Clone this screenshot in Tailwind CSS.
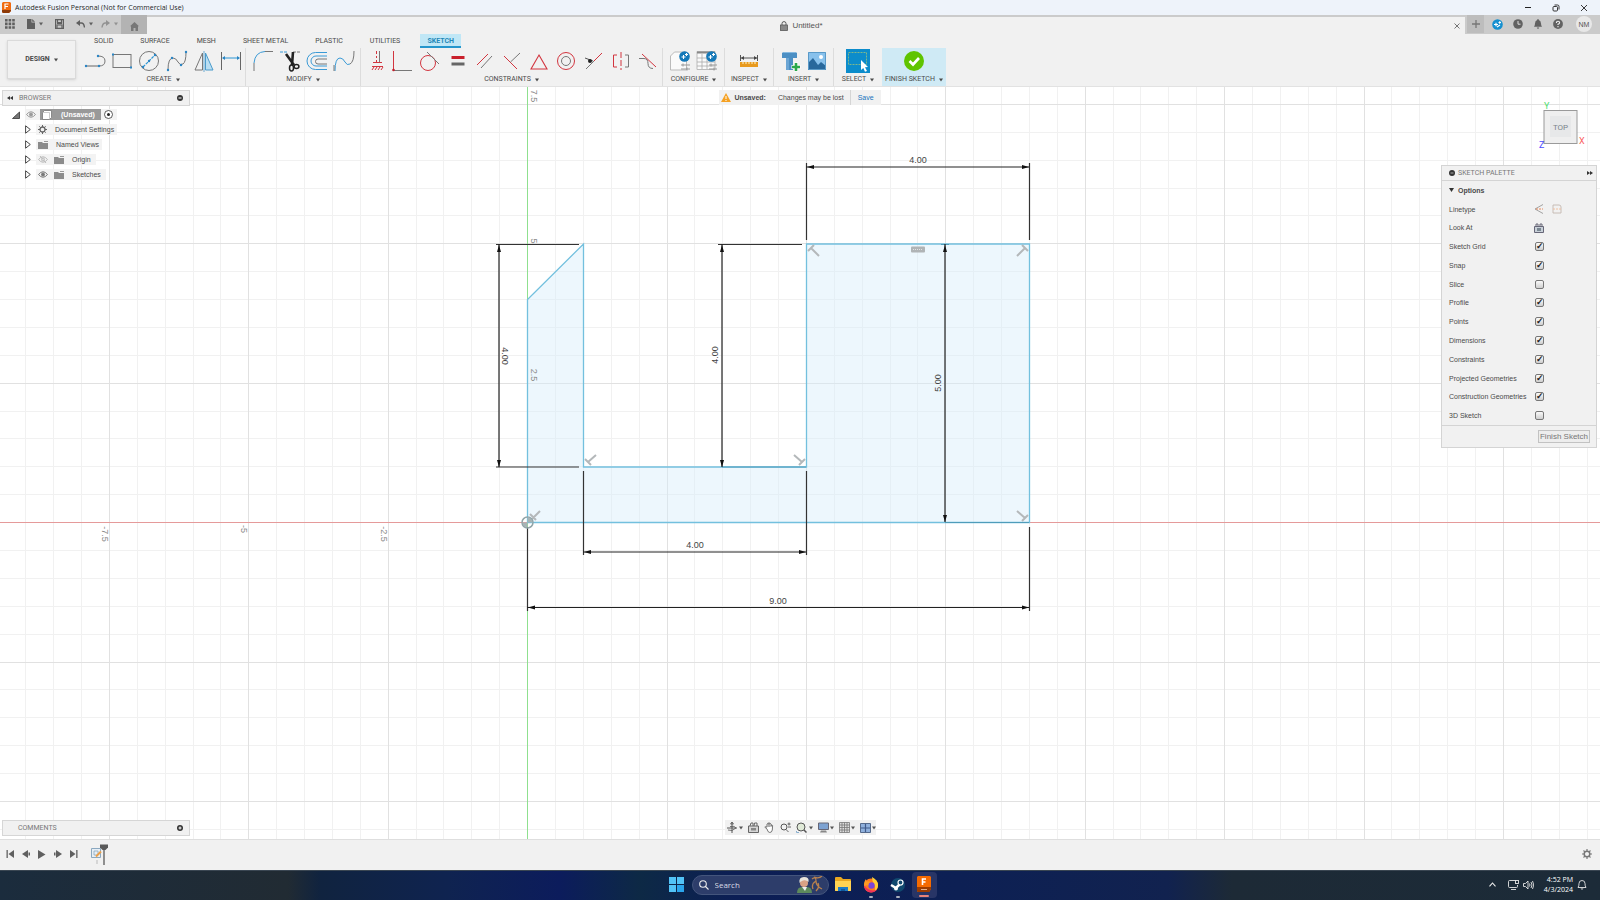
<!DOCTYPE html>
<html lang="en">
<head>
    <meta charset="UTF-8">
    <meta name="viewport" content="width=device-width, initial-scale=1.0">
    <title>Autodesk Fusion Personal (Not for Commercial Use)</title>
    <script src="https://cdn.jsdelivr.net/npm/@tailwindcss/browser@4"></script>
</head>
<body class="h-screen flex flex-col overflow-hidden bg-[#f1f1f1] font-['Liberation_Sans',Arial,sans-serif] text-[7px] leading-none text-[#4a4a4a]">

    <!-- Shared symbols -->
    <svg class="hidden">
        <symbol id="caret" viewBox="0 0 4 4"><path d="M0 .5h4L2 3.5z" fill="currentColor"/></symbol>
        <symbol id="expand" viewBox="0 0 6 9"><path d="M.6.8L5.300 4.500.6 8.200z" fill="#fff" stroke="#333" stroke-width=".9"/></symbol>
        <symbol id="folder" viewBox="0 0 10 8"><path d="M0 1h4l1 1h5v6H0z" fill="#8b8b8b"/><path d="M6 0h4v1H6z" fill="#999"/></symbol>
    </svg>

    <!-- Window title bar -->
    <header class="h-[15px] shrink-0 flex items-center justify-between bg-[#eef3fa] pl-[2px] pr-3 font-['Open_Sans',sans-serif] text-[#1f1f1f]">
        <div class="flex items-center gap-1">
            <svg class="w-[9px] h-[11px]" viewBox="0 0 9 11"><path d="M1 0h7l1 1v8l-2 2H1l-1-1V1z" fill="#f06a10"/><path d="M0 8h9v1l-2 2H1l-1-1z" fill="#8d3a08"/><path d="M3 7V2h3.5M3 4.5h3" stroke="#fff" stroke-width="1.2" fill="none"/></svg>
            <h1 class="text-[7px]">Autodesk Fusion Personal (Not for Commercial Use)</h1>
        </div>
        <div class="flex items-center gap-5">
            <button aria-label="Minimize"><svg class="w-2 h-2" viewBox="0 0 8 8" fill="none" stroke="#222"><path d="M1 3.5h6"/></svg></button>
            <button aria-label="Restore"><svg class="w-2 h-2" viewBox="0 0 8 8" fill="none" stroke="#222" stroke-width=".9"><rect x="1" y="2.5" width="4.5" height="4.5" rx="1"/><path d="M2.5 1h3q1.5 0 1.5 1.5v3"/></svg></button>
            <button aria-label="Close"><svg class="w-2 h-2" viewBox="0 0 8 8" fill="none" stroke="#222" stroke-width=".9"><path d="M1 1l6 6M7 1L1 7"/></svg></button>
        </div>
    </header>

    <!-- Quick access and document tab -->
    <div class="h-[19px] shrink-0 flex items-stretch bg-[#cbcbcb]">
        <div class="w-[121px] flex items-center pl-[5px] pb-[1px] text-[#5f5f5f]">
            <button aria-label="Data panel" class="mr-3"><svg class="w-[10px] h-[10px]" viewBox="0 0 10 10" fill="currentColor"><path d="M0 0h2.6v2.6H0zM3.6 0h2.6v2.6H3.6zM7.2 0h2.6v2.6H7.2zM0 3.6h2.6v2.6H0zM3.6 3.6h2.6v2.6H3.6zM7.2 3.6h2.6v2.6H7.2zM0 7.2h2.6v2.6H0zM3.6 7.2h2.6v2.6H3.6zM7.2 7.2h2.6v2.6H7.2z"/></svg></button>
            <button aria-label="File" class="flex items-center gap-1 mr-3"><svg class="w-2 h-[10px]" viewBox="0 0 8 10" fill="currentColor"><path d="M0 0h4.5v3.5H8V10H0z"/><path d="M5.2 0L8 2.8H5.2z"/></svg><svg class="w-1 h-1"><use href="#caret"/></svg></button>
            <button aria-label="Save" class="mr-3"><svg class="w-[9px] h-[10px]" viewBox="0 0 9 10" fill="none" stroke="currentColor" stroke-width="1.2"><path d="M.6.6h7.8v8.8H.6z"/><path d="M2.5.6v3h4v-3M2 9V6h5v3"/><path d="M2 4.6h5"/></svg></button>
            <button aria-label="Undo" class="flex items-center gap-1 mr-2"><svg class="w-[9px] h-[8px]" viewBox="0 0 9 8"><path d="M0 3l4-3v6z" fill="currentColor"/><path d="M3 3h2.5Q8 3 8.5 7.5" fill="none" stroke="currentColor" stroke-width="1.4"/></svg><svg class="w-1 h-1"><use href="#caret"/></svg></button>
            <button aria-label="Redo" class="flex items-center gap-1 text-[#929292]"><svg class="w-[9px] h-[8px]" viewBox="0 0 9 8"><path d="M9 3L5 0v6z" fill="currentColor"/><path d="M6 3H4.500Q1.500 3 1 7.500" fill="none" stroke="currentColor" stroke-width="1.4"/></svg><svg class="w-1 h-1"><use href="#caret"/></svg></button>
        </div>
        <button aria-label="Home" class="w-[26px] flex items-center justify-center bg-[#b3b3b3] pt-[3px]"><svg class="w-[9px] h-[9px]" viewBox="0 0 9 9"><path d="M4.500 0L9 4.200H8V9H5.500V6h-2v3H1V4.200H0z" fill="#777"/></svg></button>
        <div class="flex-1 flex items-center bg-[#f1f1f1] mt-[2px] pr-[5px]">
            <div class="flex-1 flex items-center justify-center gap-1 pl-[2px] text-[8px] text-[#555]">
                <svg class="w-2 h-[10px]" viewBox="0 0 8 10"><rect x=".5" y="4" width="7" height="5.500" fill="#8a8a8a" stroke="#5a5a5a" stroke-width=".8"/><path d="M2 4V2.500Q2 .6 4 .6T6 2.500V4" fill="none" stroke="#5a5a5a"/></svg>
                <span>Untitled*</span>
            </div>
            <button aria-label="Close tab"><svg class="w-[6px] h-[6px]" viewBox="0 0 6 6" stroke="#666" stroke-width=".9"><path d="M.5.5l5 5M5.500.5l-5 5"/></svg></button>
        </div>
        <div class="w-[135px] flex items-center gap-[10px] pl-[2px] pb-[1px]">
            <button aria-label="New tab" class="w-[17px] h-full flex items-center justify-center bg-[#bdbdbd]"><svg class="w-2 h-2" viewBox="0 0 8 8" stroke="#777" stroke-width="1.3"><path d="M4 0v8M0 4h8"/></svg></button>
            <button aria-label="Extensions" class="-ml-[2px]"><svg class="w-[11px] h-[11px]" viewBox="0 0 11 11"><circle cx="5.500" cy="5.500" r="5.300" fill="#1590d0"/><path d="M2 5.500h4M4 3.700v3.600M6.500 3.500h2.500M7.700 2.300v2.500M5 8l3-2" stroke="#fff" stroke-width="1.200"/></svg></button>
            <button aria-label="Job status"><svg class="w-[10px] h-[10px]" viewBox="0 0 10 10"><circle cx="5" cy="5" r="4.800" fill="#626262"/><path d="M5 2v3.200h2.500" stroke="#ddd" fill="none"/></svg></button>
            <button aria-label="Notifications"><svg class="w-[10px] h-[10px]" viewBox="0 0 10 10" fill="#626262"><path d="M5 0Q5.800 0 5.800 1Q8 1.800 8 4.500Q8 6.500 9 7.800H1Q2 6.500 2 4.500Q2 1.800 4.200 1Q4.200 0 5 0z"/><path d="M3.800 8.400h2.400Q6 9.800 5 9.800T3.800 8.400z"/></svg></button>
            <button aria-label="Help"><svg class="w-[10px] h-[10px]" viewBox="0 0 10 10"><circle cx="5" cy="5" r="4.900" fill="#626262"/><path d="M3.400 3.900Q3.400 2.300 5 2.300T6.600 3.800Q6.600 4.700 5 5.300V6M5 7v1.200" stroke="#eee" stroke-width="1.100" fill="none"/></svg></button>
            <button class="w-4 h-4 ml-[3px] rounded-full bg-[#e8e8e8] text-[7px] text-[#555] whitespace-nowrap">NM</button>
        </div>
    </div>

    <!-- Ribbon -->
    <div class="h-[53px] shrink-0 flex border-b border-[#e2e2e2] bg-[#f1f1f1] font-[Roboto,sans-serif]">
        <div class="w-[81px] pl-[7px] pt-[6px]">
            <button class="w-[69px] h-[39px] flex items-center justify-center gap-1 border border-[#dadada] shadow-sm font-bold text-[7px]">DESIGN <svg class="w-1 h-1"><use href="#caret"/></svg></button>
        </div>
        <div class="flex flex-col text-[7px]">
            <nav class="h-[14px] flex items-center gap-[13px] pl-[6px]">
                <a href="#" class="px-[7px] pt-[1px]">SOLID</a>
                <a href="#" class="px-[7px] pt-[1px]">SURFACE</a>
                <a href="#" class="px-[7px] pt-[1px]">MESH</a>
                <a href="#" class="px-[7px] pt-[1px]">SHEET METAL</a>
                <a href="#" class="px-[7px] pt-[1px]">PLASTIC</a>
                <a href="#" class="px-[7px] pt-[1px]">UTILITIES</a>
                <a href="#" class="w-[41px] h-[14px] flex items-center justify-center bg-[#c0e7f6] border-b-2 border-[#2596cc] pt-[2px] font-bold text-[#2487b8]">SKETCH</a>
            </nav>
            <div class="flex-1 flex">
                <!-- Create -->
                <section class="w-[165px] flex flex-col border-r border-[#dcdcdc]">
                    <div class="h-[26px] grid grid-cols-6 items-center justify-items-center">
                        <button aria-label="Line"><svg class="w-[22px] h-[22px]" viewBox="0 0 22 22" fill="none"><path d="M2 16h13" stroke="#666"/><path d="M14 6q7 0 7 5t-6 5" stroke="#777"/><g fill="#2a85c4"><circle cx="2" cy="16" r="1.200"/><circle cx="15" cy="16" r="1.200"/><circle cx="14" cy="6" r="1.200"/></g></svg></button>
                        <button aria-label="Rectangle"><svg class="w-[22px] h-[22px]" viewBox="0 0 22 22" fill="none"><rect x="2" y="4.500" width="18" height="13" stroke="#777"/><rect x="1" y="3.500" width="2" height="2" fill="#2a85c4"/><rect x="19" y="16.500" width="2" height="2" fill="#2a85c4"/></svg></button>
                        <button aria-label="Circle"><svg class="w-[22px] h-[22px]" viewBox="0 0 22 22" fill="none"><circle cx="11" cy="11" r="9.500" stroke="#777"/><path d="M5 17L17 5" stroke="#2a95d4" stroke-width="1.200" stroke-dasharray="3 1"/><g fill="#2a85c4"><circle cx="5" cy="17" r="1.200"/><circle cx="11" cy="11" r="1.200"/><circle cx="17" cy="5" r="1.200"/></g></svg></button>
                        <button aria-label="Spline"><svg class="w-[22px] h-[22px]" viewBox="0 0 22 22" fill="none"><path d="M2 20Q2 8 7 8q3 0 5 4t5 2q3-2 3-12" stroke="#777"/><g fill="#2a85c4"><circle cx="2" cy="20" r="1.200"/><circle cx="6" cy="8" r="1.200"/><circle cx="15" cy="15" r="1.200"/><circle cx="20" cy="2" r="1.200"/></g></svg></button>
                        <button aria-label="Mirror"><svg class="w-[22px] h-[22px]" viewBox="0 0 22 22" fill="none"><path d="M9.500 3v17H2z" stroke="#777"/><path d="M12.500 3v17H20z" fill="#b9def2" stroke="#4a9bcc"/><path d="M11 1v21" stroke="#4a9bcc" stroke-width=".8"/></svg></button>
                        <button aria-label="Sketch dimension"><svg class="w-[22px] h-[22px]" viewBox="0 0 22 22" fill="none"><path d="M1.500 2v18M20.500 2v18" stroke="#666"/><path d="M3 8h16" stroke="#2a95d4"/><path d="M2 8l3-2v4zM20 8l-3-2v4z" fill="#2a85c4"/></svg></button>
                    </div>
                    <button class="h-[11px] flex items-center justify-center gap-1">CREATE <svg class="w-1 h-1"><use href="#caret"/></svg></button>
                </section>
                <!-- Modify -->
                <section class="w-[115px] flex flex-col border-r border-[#dcdcdc]">
                    <div class="h-[26px] px-[3px] grid grid-cols-4 items-center justify-items-center">
                        <button aria-label="Fillet"><svg class="w-[22px] h-[22px]" viewBox="0 0 22 22" fill="none"><path d="M2 13Q3 2 13 1.500" stroke="#3a9ad6"/><path d="M2 13v8M13 1.500h8" stroke="#777"/></svg></button>
                        <button aria-label="Trim"><svg class="w-[22px] h-[22px]" viewBox="0 0 22 22" fill="none"><path d="M1 2h8" stroke="#3a9ad6" stroke-dasharray="3 1"/><path d="M14 2h7" stroke="#777" stroke-dasharray="3 1"/><path d="M7 4l8 11M14 2l-1 13" stroke="#222" stroke-width="2.600"/><ellipse cx="12.500" cy="18" rx="2" ry="3" stroke="#222" stroke-width="1.500"/><ellipse cx="17.500" cy="16.500" rx="2.400" ry="2" stroke="#222" stroke-width="1.500"/></svg></button>
                        <button aria-label="Offset"><svg class="w-[22px] h-[22px]" viewBox="0 0 22 22" fill="none"><path d="M21 2.500H9.500a8.500 8.500 0 000 17H21" stroke="#3a9ad6"/><path d="M21 6H10a5 5 0 000 10h11" stroke="#3a9ad6"/><path d="M21 9H12a2.500 2.500 0 000 5h9" stroke="#777"/></svg></button>
                        <button aria-label="Curvature"><svg class="w-[22px] h-[22px]" viewBox="0 0 22 22" fill="none"><path d="M2 21Q2 8 7 8q3 0 5 4t5 2" stroke="#3a9ad6"/><path d="M17 14q4-2 4-13M1 21v-6" stroke="#777"/></svg></button>
                    </div>
                    <button class="h-[11px] flex items-center justify-center gap-1">MODIFY <svg class="w-1 h-1"><use href="#caret"/></svg></button>
                </section>
                <!-- Constraints -->
                <section class="w-[302px] flex flex-col border-r border-[#dcdcdc]">
                    <div class="h-[26px] grid grid-cols-11 items-center justify-items-center">
                        <button aria-label="Horizontal/Vertical"><svg class="w-[22px] h-[22px]" viewBox="0 0 22 22" fill="none" stroke="#d2353f"><path d="M15.500 1v11" stroke="#777"/><path d="M12.500 1v3m0 2v2m0 2v2M9 12.500h9M8 16.500h11"/><path d="M10 17l-2 3m5-3l-2 3m5-3l-2 3m5-3l-2 3"/></svg></button>
                        <button aria-label="Coincident"><svg class="w-[22px] h-[22px]" viewBox="0 0 22 22" fill="none"><path d="M2.500 1v19" stroke="#d2353f"/><path d="M2 20.500h19" stroke="#777"/><circle cx="2.500" cy="20" r="1.300" fill="#c1202c"/></svg></button>
                        <button aria-label="Tangent"><svg class="w-[22px] h-[22px]" viewBox="0 0 22 22" fill="none"><circle cx="10" cy="13" r="7.500" stroke="#d2353f"/><path d="M9 2l12 12" stroke="#777"/></svg></button>
                        <button aria-label="Equal"><svg class="w-[22px] h-[22px]" viewBox="0 0 22 22"><path d="M5.500 6h13v3h-13z" fill="#c9202c"/><path d="M5.500 12.500h13v3h-13z" fill="#666"/></svg></button>
                        <button aria-label="Parallel"><svg class="w-[22px] h-[22px]" viewBox="0 0 22 22"><path d="M4 15L15 4" stroke="#d2353f"/><path d="M8 18L19 6" stroke="#777"/></svg></button>
                        <button aria-label="Perpendicular"><svg class="w-[22px] h-[22px]" viewBox="0 0 22 22"><path d="M4 6l13 13" stroke="#d2353f"/><path d="M10.500 12L20 3" stroke="#777"/></svg></button>
                        <button aria-label="Fix"><svg class="w-[22px] h-[22px]" viewBox="0 0 22 22" fill="none"><path d="M11 5l8 14H3z" stroke="#d2353f" stroke-width="1.100"/></svg></button>
                        <button aria-label="Concentric"><svg class="w-[22px] h-[22px]" viewBox="0 0 22 22" fill="none"><circle cx="11" cy="11" r="8.500" stroke="#d2353f"/><circle cx="11" cy="11" r="4.500" stroke="#777"/></svg></button>
                        <button aria-label="Midpoint"><svg class="w-[22px] h-[22px]" viewBox="0 0 22 22"><path d="M3 19l8-8" stroke="#777"/><path d="M11 11l8-8" stroke="#d2353f"/><path d="M2 8l8 3" stroke="#555"/><circle cx="7" cy="11" r="2" fill="#222"/></svg></button>
                        <button aria-label="Symmetry"><svg class="w-[22px] h-[22px]" viewBox="0 0 22 22" fill="none"><path d="M7 5H3.500v12H7" stroke="#d2353f"/><path d="M15 5h3.500v12H15" stroke="#777"/><path d="M11 2v18" stroke="#d2353f" stroke-dasharray="6 2"/></svg></button>
                        <button aria-label="Curvature constraint"><svg class="w-[22px] h-[22px]" viewBox="0 0 22 22" fill="none"><path d="M5 4l14 13" stroke="#d2353f"/><path d="M2 8.500h5q4 0 4 5t5 5" stroke="#777"/></svg></button>
                    </div>
                    <button class="h-[11px] flex items-center justify-center gap-1">CONSTRAINTS <svg class="w-1 h-1"><use href="#caret"/></svg></button>
                </section>
                <!-- Configure -->
                <section class="w-[62px] flex flex-col border-r border-[#dcdcdc]">
                    <div class="h-[26px] px-1 grid grid-cols-2 items-center justify-items-center">
                        <button aria-label="Configure"><svg class="w-[22px] h-[22px]" viewBox="0 0 22 22" fill="none"><path d="M1.500 20V6l4-4h12v18z" fill="#fafafa" stroke="#bbb"/><circle cx="15.500" cy="6.500" r="5.300" fill="#1478b8"/><path d="M12.500 7h4M14.500 5v4M16 4.500h3M17.500 3v3" stroke="#fff" stroke-width="1.100"/><path d="M12 15h9M12 19h9M14 13.500v3M18 17.500v3" stroke="#999"/></svg></button>
                        <button aria-label="Configuration table"><svg class="w-[22px] h-[22px]" viewBox="0 0 22 22" fill="none"><path d="M1 1.500h18v18H1z" fill="#fafafa" stroke="#bbb"/><path d="M1 2.500h18" stroke="#888" stroke-width="2"/><path d="M1 8h18M1 12h18M1 16h18M6 4v15M11 4v15" stroke="#aaa" stroke-width=".8"/><circle cx="15.500" cy="6.500" r="5.300" fill="#1478b8"/><path d="M12.500 7h4M14.500 5v4M16 4.500h3M17.500 3v3" stroke="#fff" stroke-width="1.100"/><path d="M13 15h8M13 19h8M15 13.500v3M18 17.500v3" stroke="#999"/></svg></button>
                    </div>
                    <button class="h-[11px] flex items-center justify-center gap-1">CONFIGURE <svg class="w-1 h-1"><use href="#caret"/></svg></button>
                </section>
                <!-- Inspect -->
                <section class="w-[49px] flex flex-col border-r border-[#dcdcdc]">
                    <div class="h-[26px] flex items-center justify-center">
                        <button aria-label="Measure"><svg class="w-[22px] h-[22px]" viewBox="0 0 22 22" fill="none"><path d="M2.500 5v6M19.500 5v6M3 8h16" stroke="#555"/><path d="M3 8l3-2v4zM19 8l-3-2v4z" fill="#444"/><path d="M2 12h18v5H2z" fill="#e89a1e"/><path d="M5 12v2m3-2v2m3-2v2m3-2v2m3-2v2" stroke="#fff3c8"/></svg></button>
                    </div>
                    <button class="h-[11px] flex items-center justify-center gap-1">INSPECT <svg class="w-1 h-1"><use href="#caret"/></svg></button>
                </section>
                <!-- Insert -->
                <section class="w-[60px] flex flex-col border-r border-[#dcdcdc]">
                    <div class="h-[26px] px-[2px] grid grid-cols-2 items-center justify-items-center">
                        <button aria-label="Insert fastener"><svg class="w-[22px] h-[22px]" viewBox="0 0 22 22"><path d="M3 3l2-1h11l2 1v5H3z" fill="#4c8fc4"/><path d="M3 3l2-1h11l2 1z" fill="#86b9e0"/><path d="M7 8h7v12H7z" fill="#6ba5d4"/><path d="M10 8h4v12h-4z" fill="#4c8fc4"/><path d="M17 12.500v9M12.500 17h9" stroke="#fff" stroke-width="4"/><path d="M17 13v8M13 17h8" stroke="#2aa84a" stroke-width="2.600"/></svg></button>
                        <button aria-label="Insert canvas"><svg class="w-[22px] h-[22px]" viewBox="0 0 22 22"><path d="M2 2h18v18H2z" fill="#88c1ec"/><circle cx="15" cy="7" r="2" fill="#fff"/><path d="M2 13l5-5 5 7 3-3 5 4v4H2z" fill="#28689c"/><path d="M2.500 2.500h17v17h-17z" fill="none" stroke="#5a9ac8"/></svg></button>
                    </div>
                    <button class="h-[11px] flex items-center justify-center gap-1">INSERT <svg class="w-1 h-1"><use href="#caret"/></svg></button>
                </section>
                <!-- Select -->
                <section class="w-[48px] flex flex-col">
                    <div class="h-[26px] flex items-center justify-center">
                        <button aria-label="Select"><svg class="w-6 h-6" viewBox="0 0 24 24"><path d="M0 0h24v24H0z" fill="#0c8ccb"/><path d="M2.500 3.500h18v12h-18z" fill="none" stroke="#7fb88a" stroke-dasharray="2 1"/><path d="M15 11l7 7-3 .3 2 3.700-2 .8-1.700-3.800L15 21z" fill="#fff"/></svg></button>
                    </div>
                    <button class="h-[11px] flex items-center justify-center gap-1">SELECT <svg class="w-1 h-1"><use href="#caret"/></svg></button>
                </section>
                <!-- Finish sketch -->
                <section class="w-[64px] flex flex-col bg-[#cfeaf5]">
                    <div class="h-[26px] flex items-center justify-center">
                        <button aria-label="Finish sketch"><svg class="w-5 h-5" viewBox="0 0 20 20"><circle cx="10" cy="10" r="10" fill="#5fc400"/><path d="M5.500 10l3.500 3.500 6-6.500" fill="none" stroke="#fff" stroke-width="2.600"/></svg></button>
                    </div>
                    <button class="h-[11px] flex items-center justify-center gap-1 whitespace-nowrap">FINISH SKETCH <svg class="w-1 h-1"><use href="#caret"/></svg></button>
                </section>
            </div>
        </div>
    </div>

    <!-- Canvas -->
    <main class="relative flex-1 min-h-0 bg-white">
        <svg class="absolute inset-0 w-full h-full" viewBox="0 87 1600 752" preserveAspectRatio="xMidYMid slice" font-family="Liberation Sans, Arial, sans-serif" font-size="9">
            <path id="gridMinor" fill="none" stroke="#f1f1f1"/>
            <path id="gridMajor" fill="none" stroke="#e1e1e1"/>
            <path d="M0 522.500H1600" stroke="#e59a9a"/>
            <path d="M527.500 87V839" stroke="#8fe08f"/>
            <path d="M527.500 522.500H1029.500V244H806.500V467H583.500V244L527.500 299.500Z" fill="#d8edfb" fill-opacity=".45" stroke="#73c0de" stroke-width="1.300"/>
            <!-- extension lines -->
            <path d="M496 244.500H579M496 467H579M718 244.500H802M806.500 163V240M1029.500 163V240M583.500 471V555M806.500 471V555M527.500 527V611M1029.500 527V611" stroke="#333" stroke-width="1.200"/>
            <path d="M941 244.500h8M722 467h84M945 522.500h84" stroke="#4f9cba"/>
            <!-- dimension lines -->
            <g stroke="#222" stroke-width="1.200">
                <path d="M499 244V467M722 244V467M945 244V522M806 167H1029M583 552H806M527 607.500H1029"/>
            </g>
            <g fill="#111">
                <path d="M499 245l-2 7h4zM499 467l-2-7h4zM722 245l-2 7h4zM722 467l-2-7h4zM945 245l-2 7h4zM945 522l-2-7h4z"/>
                <path d="M807 167l7-2v4zM1029 167l-7-2v4zM584 552l7-2v4zM806 552l-7-2v4zM528 607.500l7-2v4zM1029 607.500l-7-2v4z"/>
            </g>
            <!-- perpendicular glyphs -->
            <g fill="none" stroke="#b4b8ba" stroke-width="2">
                <path d="M808 251l6-6M811 248l8 8M1022 245l6 6M1025 248l-8 8"/>
                <path d="M585 459l6 6M588 462l8-7M805 459l-6 6M802 462l-8-7M1028 515l-6 6M1025 518l-8-7M530 514l6 6M532 519l8-8"/>
                <circle cx="527.500" cy="522.500" r="5.500" stroke="#90a4a8" stroke-width="1.500"/>
                <path d="M527.500 522.500v-5a5 5 0 015 5zM527.500 522.500v5a5 5 0 01-5-5z" stroke="none" fill="#a8b4b6"/>
            </g>
            <rect x="911" y="246.500" width="14" height="6" rx="1" fill="#b0b4b6"/>
            <path d="M913 249.500h10" stroke="#e2e2e2" stroke-width="1" stroke-dasharray="1 1"/>
            <!-- dimension values -->
            <g fill="#444" text-anchor="middle">
                <text x="918" y="163">4.00</text>
                <text x="695" y="548">4.00</text>
                <text x="778" y="604">9.00</text>
                <text transform="translate(502 356) rotate(90)">4.00</text>
                <text transform="translate(718 355) rotate(-90)">4.00</text>
                <text transform="translate(941 383) rotate(-90)">5.00</text>
            </g>
            <g fill="#8a8a8a" text-anchor="middle">
                <text transform="translate(531 96) rotate(90)">7.5</text>
                <text transform="translate(531 241) rotate(90)">5</text>
                <text transform="translate(531 375) rotate(90)">2.5</text>
                <text transform="translate(102 534) rotate(90)">-7.5</text>
                <text transform="translate(241 529) rotate(90)">-5</text>
                <text transform="translate(381 534) rotate(90)">-2.5</text>
            </g>
            <!-- view cube -->
            <g font-family="Roboto, sans-serif" font-size="9">
                <rect x="1544" y="110.500" width="33" height="33" fill="#efefef" stroke="#9a9a9a"/>
                <rect x="1550" y="116" width="21" height="21" fill="#e7e8e9"/>
                <text x="1560.500" y="130" text-anchor="middle" fill="#7b858c" font-size="8">TOP</text>
                <text x="1544" y="109" fill="#4fe070">Y</text>
                <text x="1579" y="144" fill="#fa5c5c">X</text>
                <text x="1539" y="148" fill="#4c4cff">Z</text>
            </g>
        </svg>

        <!-- Browser panel -->
        <aside class="absolute left-[2px] top-[3px] w-[188px]">
            <div class="h-4 flex items-center justify-between border border-[#d6d6d6] bg-[#f1f1f1] pl-1 pr-[6px] text-[#777]">
                <div class="flex items-center gap-[6px]">
                    <svg class="w-[6px] h-[4px]" viewBox="0 0 6 4" fill="#333"><path d="M3 0v4L0 2zM6 0v4L3 2z"/></svg>
                    <h2 class="font-[Roboto,sans-serif] text-[7px]">BROWSER</h2>
                </div>
                <button aria-label="Collapse browser"><svg class="w-[6px] h-[6px]" viewBox="0 0 6 6"><circle cx="3" cy="3" r="3" fill="#333"/><path d="M1.500 3h3" stroke="#fff"/></svg></button>
            </div>
            <ul class="pl-[10px] pt-[1px]">
                <li class="h-[15px] flex items-center gap-[6px]">
                    <svg class="w-2 h-2" viewBox="0 0 8 8"><path d="M7.500 1v6.500H.5z" fill="#777" stroke="#333" stroke-width=".8"/></svg>
                    <div class="h-[11px] flex items-center bg-[#f3f3f3] pr-1">
                        <svg class="w-[10px] h-[7px] mr-1" viewBox="0 0 10 7" fill="none" stroke="#999"><path d="M.5 3.500Q5-2 9.500 3.500Q5 9 .5 3.500z"/><circle cx="5" cy="3.500" r="1.500" fill="#999"/></svg>
                        <span class="w-[61px] h-[11px] flex items-center gap-[9px] bg-[#999] pl-[2px] font-bold text-white"><svg class="w-[10px] h-[10px]" viewBox="0 0 10 10"><path d="M.5 2.500l2-2h7v7l-2 2h-7z" fill="#fff" stroke="#777" stroke-width=".8"/><path d="M7.500 9.500v-7h-7" fill="none" stroke="#aaa" stroke-width=".6"/></svg>(Unsaved)</span>
                        <svg class="w-[9px] h-[9px] ml-[3px]" viewBox="0 0 9 9"><circle cx="4.500" cy="4.500" r="4" fill="#fff" stroke="#333" stroke-width=".8"/><circle cx="4.500" cy="4.500" r="1.500" fill="#222"/></svg>
                    </div>
                </li>
                <li class="h-[15px] flex items-center gap-[5px] pl-[13px]">
                    <svg class="w-[6px] h-[9px]"><use href="#expand"/></svg>
                    <div class="h-[11px] flex items-center gap-2 bg-[#f3f3f3] pl-[2px] pr-[3px]"><svg class="w-[9px] h-[9px]" viewBox="0 0 9 9" fill="none" stroke="#666"><circle cx="4.500" cy="4.500" r="2.500" stroke-width="1.300"/><path d="M4.500 0v2M4.500 7v2M0 4.500h2M7 4.500h2M1.300 1.300l1.400 1.400M6.300 6.300l1.400 1.400M7.700 1.300L6.300 2.700M2.700 6.300L1.300 7.700"/></svg>Document Settings</div>
                </li>
                <li class="h-[15px] flex items-center gap-[5px] pl-[13px]">
                    <svg class="w-[6px] h-[9px]"><use href="#expand"/></svg>
                    <div class="h-[11px] flex items-center gap-2 bg-[#f3f3f3] pl-[2px] pr-[3px]"><svg class="w-[10px] h-2"><use href="#folder"/></svg>Named Views</div>
                </li>
                <li class="h-[15px] flex items-center gap-[5px] pl-[13px]">
                    <svg class="w-[6px] h-[9px]"><use href="#expand"/></svg>
                    <div class="h-[11px] flex items-center bg-[#f3f3f3] pl-[2px] pr-[5px]"><svg class="w-[10px] h-[7px] mr-[6px]" viewBox="0 0 10 7" fill="none" stroke="#bbb"><path d="M.5 3.500Q5-2 9.500 3.500Q5 9 .5 3.500z"/><circle cx="5" cy="3.500" r="1.500"/><path d="M2 0l6 7"/></svg><svg class="w-[10px] h-2 mr-2"><use href="#folder"/></svg>Origin</div>
                </li>
                <li class="h-[15px] flex items-center gap-[5px] pl-[13px]">
                    <svg class="w-[6px] h-[9px]"><use href="#expand"/></svg>
                    <div class="h-[11px] flex items-center bg-[#f3f3f3] pl-[2px] pr-[5px]"><svg class="w-[10px] h-[7px] mr-[6px]" viewBox="0 0 10 7" fill="none" stroke="#777"><path d="M.5 3.500Q5-2 9.500 3.500Q5 9 .5 3.500z"/><circle cx="5" cy="3.500" r="1.500" fill="#777"/></svg><svg class="w-[10px] h-2 mr-2"><use href="#folder"/></svg>Sketches</div>
                </li>
            </ul>
        </aside>

        <!-- Unsaved notice -->
        <div class="absolute top-[3px] inset-x-0 flex justify-center">
            <div class="h-[15px] flex items-center bg-[#f1f1f1] pl-[2px]">
                <svg class="w-[10px] h-[9px] mr-[3px]" viewBox="0 0 10 9"><path d="M5 0l5 9H0z" fill="#f5a122"/><path d="M5 3v3M5 7v1" stroke="#fff"/></svg>
                <strong class="mr-3">Unsaved:</strong>
                <span class="mr-[6px]">Changes may be lost</span>
                <a href="#" class="h-[15px] flex items-center border-l border-[#d5d5d5] px-[7px] text-[#1673bd]">Save</a>
            </div>
        </div>

        <!-- Sketch palette -->
        <form class="absolute right-[3px] top-[78px] w-[156px] border border-[#d4d4d4] bg-[#f1f1f1]">
            <div class="h-[15px] flex items-center gap-[3px] border-b border-[#d4d4d4] pl-[7px] pr-[3px] text-[#777]">
                <svg class="w-[6px] h-[6px]" viewBox="0 0 6 6"><circle cx="3" cy="3" r="3" fill="#333"/><path d="M1.500 3h3" stroke="#aaa"/></svg>
                <h2 class="flex-1 font-[Roboto,sans-serif] text-[7px]">SKETCH PALETTE</h2>
                <svg class="w-[6px] h-[4px]" viewBox="0 0 6 4" fill="#333"><path d="M0 0v4L3 2zM3 0v4L6 2z"/></svg>
            </div>
            <div class="h-[244px] grid grid-rows-13 pl-[7px] pr-[52px]">
                <h3 class="flex items-center gap-1 font-bold"><svg class="w-[5px] h-1" viewBox="0 0 5 4"><path d="M0 0h5L2.500 4z" fill="#333"/></svg>Options</h3>
                <div class="flex items-center justify-between"><span>Linetype</span>
                    <div class="flex gap-2 -mr-[18px]">
                        <button type="button" aria-label="Construction"><svg class="w-[10px] h-[10px]" viewBox="0 0 10 10" fill="none"><path d="M9 .5L1 5l8 4.500" stroke="#999" stroke-width=".9"/><path d="M2 5h7" stroke="#e8895a" stroke-dasharray="2 1"/></svg></button>
                        <button type="button" aria-label="Centerline"><svg class="w-[10px] h-[10px]" viewBox="0 0 10 10" fill="none"><path d="M1 1h6q2 0 2 2v6H1z" stroke="#c4b8b0" stroke-width=".9"/><path d="M1 5h8" stroke="#f0c0a0" stroke-dasharray="2 1"/></svg></button>
                    </div>
                </div>
                <div class="flex items-center justify-between"><span>Look At</span><button type="button" aria-label="Look at"><svg class="w-[10px] h-[10px]" viewBox="0 0 10 10"><path d="M.5 3.500h9v6h-9z" fill="#c8d0d8" stroke="#667"/><path d="M2 3V1h2v2M6 3V1h2v2" fill="none" stroke="#667"/><path d="M3 5h4v3H3z" fill="#7a8792"/></svg></button></div>
                <label class="option flex items-center justify-between">Sketch Grid<input type="checkbox" checked></label>
                <label class="option flex items-center justify-between">Snap<input type="checkbox" checked></label>
                <label class="option flex items-center justify-between">Slice<input type="checkbox"></label>
                <label class="option flex items-center justify-between">Profile<input type="checkbox" checked></label>
                <label class="option flex items-center justify-between">Points<input type="checkbox" checked></label>
                <label class="option flex items-center justify-between">Dimensions<input type="checkbox" checked></label>
                <label class="option flex items-center justify-between">Constraints<input type="checkbox" checked></label>
                <label class="option flex items-center justify-between">Projected Geometries<input type="checkbox" checked></label>
                <label class="option flex items-center justify-between whitespace-nowrap">Construction Geometries<input type="checkbox" checked></label>
                <label class="option flex items-center justify-between">3D Sketch<input type="checkbox"></label>
            </div>
            <div class="h-[22px] flex items-center justify-end border-t border-[#d4d4d4] pr-[6px]">
                <button type="button" class="w-[52px] h-[13px] border border-[#c2c2c2] bg-[#ededed] text-[8px] text-[#777] whitespace-nowrap">Finish Sketch</button>
            </div>
        </form>

        <!-- Comments panel -->
        <div class="absolute left-[2px] bottom-[3px] w-[188px] h-4 flex items-center justify-between border border-[#d6d6d6] bg-[#f1f1f1] pl-[15px] pr-[6px] text-[#777]">
            <h2 class="font-[Roboto,sans-serif] text-[7px]">COMMENTS</h2>
            <button aria-label="Add comment"><svg class="w-[6px] h-[6px]" viewBox="0 0 6 6"><circle cx="3" cy="3" r="3" fill="#333"/><path d="M1.500 3h3M3 1.500v3" stroke="#fff"/></svg></button>
        </div>

        <!-- Navigation bar -->
        <div class="absolute bottom-[4px] inset-x-0 flex justify-center">
            <div class="h-[15px] flex items-center gap-[5px] bg-[#f1f1f1] pl-[2px] text-[#555]">
                <button aria-label="Orbit" class="flex items-center gap-[2px]"><svg class="w-[10px] h-[11px]" viewBox="0 0 10 11" fill="none" stroke="#555"><path d="M5 0v11M0 6h10"/><path d="M5 0L3.500 2h3zM1 8q4 2 8-2Q8 3.500 3 4.500" stroke-width=".8"/></svg><svg class="w-1 h-1"><use href="#caret"/></svg></button>
                <button aria-label="Look at"><svg class="w-[11px] h-[11px]" viewBox="0 0 11 11"><path d="M.5 4h10v6.500H.5z" fill="#d5d5d5" stroke="#666"/><path d="M2 4l1-3h2v3M6 4l.5-3H9V4" fill="none" stroke="#666"/><path d="M3 6h5v2.500H3z" fill="#888"/></svg></button>
                <button aria-label="Pan"><svg class="w-[11px] h-[11px]" viewBox="0 0 11 11"><path d="M3 7L.8 5.200Q1.500 4.200 3 5.200V2q.8-1 1.300 0V1q.8-1 1.400 0v1q.8-1 1.400 0v1.500q.9-.8 1.500 0L8.300 8q-.5 2.500-2.500 2.500T3 7z" fill="#fff" stroke="#555" stroke-width=".8"/><path d="M4.300 2v3M5.700 2v3M7.100 3v2" stroke="#555" stroke-width=".6"/></svg></button>
                <button aria-label="Zoom"><svg class="w-[11px] h-[11px]" viewBox="0 0 11 11" fill="none" stroke="#555"><circle cx="4" cy="5" r="3"/><path d="M6 7.500L8.500 10M9 .5v3M7.500 2h3M8 5h3" stroke-width=".9"/></svg></button>
                <button aria-label="Zoom window" class="flex items-center gap-[2px]"><svg class="w-[11px] h-[11px]" viewBox="0 0 11 11" fill="none" stroke="#555"><circle cx="5" cy="5" r="4" fill="#e0ead8"/><path d="M8 8l2.500 2.500" stroke-width="1.500"/><path d="M.5 9v1.500H3" stroke="#8ab0d0"/></svg><svg class="w-1 h-1"><use href="#caret"/></svg></button>
                <button aria-label="Display settings" class="flex items-center gap-[1px]"><svg class="w-[11px] h-[11px]" viewBox="0 0 11 11"><path d="M.5 1h10v6.500H.5z" fill="#7da2d2" stroke="#667"/><path d="M3 8.500h5L9 10.500H2z" fill="#888"/></svg><svg class="w-1 h-1"><use href="#caret"/></svg></button>
                <button aria-label="Grid settings" class="flex items-center gap-[1px]"><svg class="w-[11px] h-[11px]" viewBox="0 0 11 11" fill="#ddd" stroke="#777" stroke-width=".8"><path d="M.5.5h10v10H.5zM3 .5v10M5.500.5v10M8 .5v10M.5 3h10M.5 5.500h10M.5 8h10"/></svg><svg class="w-1 h-1"><use href="#caret"/></svg></button>
                <button aria-label="Viewports" class="flex items-center gap-[1px]"><svg class="w-[11px] h-[10px]" viewBox="0 0 11 10"><path d="M.5.500h10v9H.5z" fill="#8fb0dc" stroke="#556a8c"/><path d="M5.500 1v8M1 5h9" stroke="#3f5a8a" stroke-width="1.200"/></svg><svg class="w-1 h-1"><use href="#caret"/></svg></button>
            </div>
        </div>
    </main>

    <!-- Timeline -->
    <div class="h-[31px] shrink-0 flex items-center border-t border-[#dedede] bg-[#f1f1f1] pl-[6px] pr-2 pb-[2px] text-[#606060]">
        <div class="flex-1 flex items-center gap-2">
            <button aria-label="To start"><svg class="w-2 h-2" viewBox="0 0 8 8" fill="currentColor"><path d="M.5 0h1.300v8H.5zM8 0v8L2.500 4z"/></svg></button>
            <button aria-label="Step back"><svg class="w-2 h-2" viewBox="0 0 8 8" fill="currentColor"><path d="M6 0v8L0 4zM6.500 2.500h1.500v3H6.500z"/></svg></button>
            <button aria-label="Play"><svg class="w-2 h-[9px]" viewBox="0 0 8 9" fill="currentColor"><path d="M0 0L7.500 4.500 0 9z"/></svg></button>
            <button aria-label="Step forward"><svg class="w-2 h-2" viewBox="0 0 8 8" fill="currentColor"><path d="M2 0v8l6-4zM0 2.500h1.500v3H0z"/></svg></button>
            <button aria-label="To end"><svg class="w-2 h-2" viewBox="0 0 8 8" fill="currentColor"><path d="M6.200 0h1.300v8H6.200zM0 0v8l5.500-4z"/></svg></button>
            <button aria-label="Sketch1" class="ml-1"><svg class="w-[18px] h-[21px]" viewBox="0 0 18 21" fill="none"><path d="M1.500 4.500h9v9h-9z" fill="#e6eef5" stroke="#8ba8c0"/><path d="M4 7h4v4H4z" stroke="#8ba8c0" stroke-width=".8"/><path d="M11 7.500L6 12.500" stroke="#eba04a" stroke-width="2"/><path d="M7 16v4" stroke="#bbb"/><path d="M10 .5h8v3L15.500 6h-3L10 3.500z" fill="#5a5a5a"/><path d="M14 5v16" stroke="#5a5a5a" stroke-width="1.300"/></svg></button>
        </div>
        <button aria-label="Timeline settings"><svg class="w-[10px] h-[10px]" viewBox="0 0 10 10" fill="none" stroke="#777"><circle cx="5" cy="5" r="2.800" stroke-width="1.500"/><path d="M5 0v2M5 8v2M0 5h2M8 5h2M1.500 1.500l1.400 1.400M7.100 7.100l1.400 1.400M8.500 1.500L7.100 2.900M2.900 7.100L1.500 8.500" stroke-width="1.200"/></svg></button>
    </div>

    <!-- Taskbar -->
    <footer class="h-[30px] shrink-0 grid grid-cols-[1fr_auto_1fr] items-center border-t border-[#3a4652] pb-[2px] bg-[linear-gradient(90deg,#1b2c3d_0%,#212b33_18%,#10233f_20%,#0f2350_28%,#0c1c5c_35%,#0d2945_40%,#0c1e55_46%,#0d2054_60%,#11224f_73%,#1d2a36_77%,#1c2b38_100%)] font-['Open_Sans',sans-serif] text-white">
        <div></div>
        <div class="flex items-center pl-[5px]">
            <button aria-label="Start" class="mr-2"><svg class="w-[15px] h-[15px]" viewBox="0 0 15 15"><path d="M0 0h7v7H0zM8 0h7v7H8zM0 8h7v7H0zM8 8h7v7H8z" fill="#52c3f7"/><path d="M8 8h7v7H8z" fill="#2ba5ec"/></svg></button>
            <label class="w-[137px] h-5 flex items-center gap-[6px] rounded-full border border-[#44557c] bg-[#2d3d6a] pl-[6px] pr-1">
                <svg class="w-[10px] h-[10px]" viewBox="0 0 10 10" fill="none" stroke="#eee" stroke-width="1.100"><circle cx="4" cy="4" r="3.300"/><path d="M6.500 6.500l3 3"/></svg>
                <input type="text" placeholder="Search" aria-label="Search" class="min-w-0 flex-1 bg-transparent text-[8px] text-white placeholder:text-[#d8dce8] outline-none">
                <svg class="w-[28px] h-[17px]" viewBox="0 0 28 17"><path d="M1 17q0-6 5-6h5q5 0 5 6z" fill="#5d8a5c"/><path d="M6 11h5l-2 4z" fill="#eee"/><circle cx="8" cy="7" r="4" fill="#d9a285"/><path d="M3.500 7Q2.500 1 8 1t4.500 5Q10 3.500 7 4.500T3.500 7z" fill="#e8e4dc"/><path d="M16 3q4-3 4 2t6 8M18 1q5 2 8-1M17 13q-2-5 3-8M20 15q4-4 2-8" stroke="#b8814e" stroke-width="1.300" fill="none"/></svg>
            </label>
            <button aria-label="File Explorer" class="w-7 flex justify-center"><svg class="w-4 h-[15px]" viewBox="0 0 16 15"><path d="M0 1q0-1 1-1h5l2 2h7q1 0 1 1v11H0z" fill="#e9a821"/><path d="M0 4h16v9q0 1-1 1H1q-1 0-1-1z" fill="#ffd353"/><path d="M3 10h10v4H3z" fill="#1b7bc8"/><path d="M6 12h4v2H6z" fill="#125a9c"/></svg></button>
            <button aria-label="Firefox" class="w-7 flex flex-col items-center pt-[5px]"><svg class="w-4 h-4" viewBox="0 0 16 16"><circle cx="8" cy="8.500" r="7" fill="#ff7a1e"/><path d="M9 0q6 3 6 8 0 4-3 6 1-4-1-7T9 0z" fill="#ffcf33"/><path d="M1 7q0 8 7 8.500 4 0 6-3-4 2-8 0T1 7z" fill="#f0305c"/><circle cx="8.500" cy="8.500" r="3.200" fill="#7a45d8"/><path d="M1 9Q1 4 3 2q0 2 1 2.500 2-.5 4 .5-3 1-2.500 3.500Q3 8 1 9z" fill="#ff9a22"/></svg><span class="w-1 h-[2px] mt-[3px] rounded bg-[#aab0bd]"></span></button>
            <button aria-label="Steam" class="w-[27px] flex flex-col items-center pt-[5px]"><svg class="w-4 h-4" viewBox="0 0 16 16" fill="none"><circle cx="8" cy="8" r="7" fill="#10496f"/><path d="M1 8l5 3 4-4" stroke="#fff" stroke-width="2.500"/><circle cx="10.500" cy="5.500" r="2.500" stroke="#fff" stroke-width="1.200" fill="#10496f"/><circle cx="6" cy="11.500" r="2" fill="#fff"/></svg><span class="w-1 h-[2px] mt-[3px] rounded bg-[#aab0bd]"></span></button>
            <button aria-label="Autodesk Fusion" class="w-[25px] h-[26px] flex flex-col items-center justify-end rounded bg-[#283566]"><svg class="w-[14px] h-[16px]" viewBox="0 0 14 16"><path d="M1 0h12l1 1v12l-2 3H1l-1-1V1z" fill="#f56a00"/><path d="M0 11h14v2l-2 3H1l-1-1z" fill="#9c3c00"/><path d="M5.500 9V3H9M5.500 6h3" stroke="#fff" stroke-width="1.600" fill="none"/><path d="M4 13.500h6" stroke="#e8b08c"/></svg><span class="w-[10px] h-[2px] mt-[3px] mb-[1px] rounded bg-[#e8837a]"></span></button>
        </div>
        <div class="flex items-center justify-end pr-[13px]">
            <button aria-label="Hidden icons" class="mr-3"><svg class="w-[7px] h-[5px]" viewBox="0 0 7 5" fill="none" stroke="#eee" stroke-width="1.100"><path d="M.5 4.300L3.500 1l3 3.300"/></svg></button>
            <button aria-label="Network" class="mr-1"><svg class="w-[11px] h-[10px]" viewBox="0 0 11 10" fill="none" stroke="#e5e5e5" stroke-width=".9"><path d="M7 .5H1.500q-1 0-1 1v5q0 1 1 1h7q1 0 1-1V5M3 9.500h5"/><rect x="7.500" y=".5" width="3" height="3"/></svg></button>
            <button aria-label="Volume" class="mr-[10px]"><svg class="w-[11px] h-[10px]" viewBox="0 0 11 10" fill="none" stroke="#e5e5e5" stroke-width=".9"><path d="M.5 3.500h2L5 1v8L2.500 6.500h-2zM6.500 3.500q1 1.500 0 3M8 2q2 3 0 6M9.500 1q2.500 4 0 8"/></svg></button>
            <div class="mr-1 flex flex-col gap-[3px] text-right text-[7px]"><time>4:52 PM</time><time>4/3/2024</time></div>
            <button aria-label="Notifications"><svg class="w-[10px] h-[10px]" viewBox="0 0 10 10" fill="none" stroke="#e5e5e5" stroke-width=".9"><path d="M5 .5Q8 .5 8 3.500q0 2.500 1 4H1q1-1.500 1-4Q2 .5 5 .5zM3.800 8.500q1.200 1.500 2.400 0"/></svg></button>
        </div>
    </footer>

    <script>
        // Sketch grid: half-unit lines, with a darker line every 2.5 units
        const originX = 527.6, originY = 522.6, step = 27.88;
        let minor = "", major = "";

        for (let k = -60; k <= 80; k++) {
            const x = Math.floor(originX + k * step) + 0.5;
            const y = Math.floor(originY + k * step) + 0.5;
            const d = `M${x} -600V1600M-600 ${y}H2400`;
            if (k % 5 === 0) {
                major += d;
            } else {
                minor += d;
            }
        }
        document.getElementById("gridMinor").setAttribute("d", minor);
        document.getElementById("gridMajor").setAttribute("d", major);

        // Palette tick boxes share one look
        document.querySelectorAll(".option input").forEach(box => {
            box.className = "appearance-none w-[9px] h-[9px] rounded-[2px] border border-[#777] bg-linear-to-b from-[#fafafa] to-[#cfcfcf] checked:after:content-['✓'] after:block after:text-[9px] after:font-bold after:leading-[7px] after:text-[#222] after:text-center";
        });
    </script>
</body>
</html>
